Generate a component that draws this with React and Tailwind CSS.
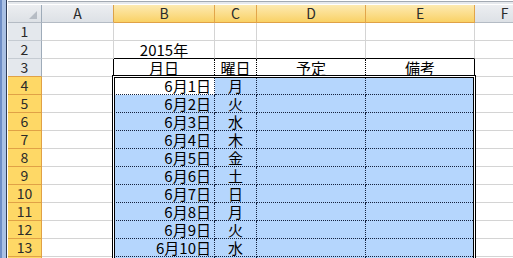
import React from 'react';

const COLS = ['A', 'B', 'C', 'D', 'E', 'F'];
const DATES = ['6月1日', '6月2日', '6月3日', '6月4日', '6月5日', '6月6日', '6月7日', '6月8日', '6月9日', '6月10日'];
const DAYS = ['月', '火', '水', '木', '金', '土', '日', '月', '火', '水'];
const HEAD3 = { B: '月日', C: '曜日', D: '予定', E: '備考' };

function ColHeader({ col }) {
  const picked = ['B', 'C', 'D', 'E'].includes(col);
  if (picked) {
    return (
      <div className="flex items-center justify-center border-r border-b border-r-[#e2a54a] border-b-[#e0a146] bg-gradient-to-b from-[#fdeab0] to-[#f9d164] text-[14px] leading-[17px] text-[#2a2a2a]">
        {col}
      </div>
    );
  }
  return (
    <div
      className={`flex items-center justify-center border-r border-b border-b-[#b4bbc4] bg-gradient-to-b from-[#eceef1] to-[#dde1e6] text-[14px] leading-[17px] text-[#2a2a2a] ${
        col === 'A' ? 'border-r-[#dca24a]' : 'border-r-[#c9ced4]'
      }`}
    >
      {col}
    </div>
  );
}

function RowHeader({ row }) {
  if (row >= 4) {
    return (
      <div className="flex items-center justify-center border-r border-b border-[#e0a146] bg-[#fed866] text-[14px] leading-[17px] text-[#2a2a2a]">
        {row}
      </div>
    );
  }
  return (
    <div
      className={`flex items-center justify-center border-r border-b border-r-[#9eabb9] bg-[#e4e8ed] text-[14px] leading-[17px] text-[#2a2a2a] ${
        row === 3 ? 'border-b-[#e0a146]' : 'border-b-[#c5cbd2]'
      }`}
    >
      {row}
    </div>
  );
}

function Cell({ row, col }) {
  const inTable = ['B', 'C', 'D', 'E'].includes(col);

  if (col === 'A') {
    return <div className={`border-r border-b border-b-[#d4d4d4] ${row === 3 ? 'border-r-black' : 'border-r-[#d4d4d4]'}`} />;
  }

  if (!inTable || row === 1) {
    return <div className="border-r border-b border-[#d4d4d4]" />;
  }

  if (row === 2) {
    return (
      <div className="flex items-center justify-center border-r border-b border-r-[#d4d4d4] border-b-black text-[15px] leading-[17px]">
        {col === 'B' ? '2015年' : ''}
      </div>
    );
  }

  if (row === 3) {
    return (
      <div
        className={`flex items-center justify-center border-r border-b border-b-black text-[15px] leading-[17px] ${
          col === 'E' ? 'border-r-black' : 'border-r-black border-dotted [border-bottom-style:solid]'
        }`}
      >
        {HEAD3[col]}
      </div>
    );
  }

  // selected range B4:E14
  const fill = row === 4 && col === 'B' ? 'bg-white' : 'bg-[#b5d6fd]';
  let text = '';
  if (row <= 13 && col === 'B') text = DATES[row - 4];
  if (row <= 13 && col === 'C') text = DAYS[row - 4];

  return (
    <div
      className={`flex items-center border-r border-b border-dotted border-[#14223f] text-[15px] leading-[17px] ${fill} ${
        col === 'B' ? 'justify-end pr-[3px]' : 'justify-center'
      }`}
    >
      {text}
    </div>
  );
}

export default function App() {
  const rows = Array.from({ length: 14 }, (_, i) => i + 1);

  return (
    <div className="w-[513px] h-[258px] overflow-hidden bg-white flex font-['Noto_Sans_CJK_JP','Noto_Sans',sans-serif] text-black">
      {/* window edge */}
      <div className="flex w-[8px] shrink-0">
        <div className="w-[2px] shrink-0 bg-[#6f8ec6]" />
        <div className="w-[4px] shrink-0 bg-[#a9c0e4]" />
        <div className="w-px shrink-0 bg-[#2f3d58]" />
        <div className="w-px shrink-0 bg-white" />
      </div>

      <div className="flex-1 flex flex-col min-w-0">
        {/* ribbon edge */}
        <div className="h-px shrink-0 bg-white" />
        <div className="h-px shrink-0 bg-[#a3aab3]" />
        <div className="h-[2px] shrink-0 bg-[#e6e9ed]" />
        <div className="h-px shrink-0 bg-white" />

        <div className="relative shrink-0 grid grid-cols-[34px_72px_101px_42px_109px_109px_60px] auto-rows-[18px]">
          {/* corner */}
          <div className="flex items-end justify-end pr-[4px] pb-[3px] border-r border-b border-r-[#9eabb9] border-b-[#b4bbc4] bg-gradient-to-b from-[#eceef1] to-[#dde1e6]">
            <svg width="8" height="8" viewBox="0 0 8 8">
              <polygon points="0,8 8,0 8,8" fill="#b6bcc4" />
            </svg>
          </div>
          {COLS.map((c) => (
            <ColHeader key={c} col={c} />
          ))}

          {rows.map((r) => (
            <React.Fragment key={r}>
              <RowHeader row={r} />
              {COLS.map((c) => (
                <Cell key={c} row={r} col={c} />
              ))}
            </React.Fragment>
          ))}

          {/* double border round B4:E13 */}
          <div className="pointer-events-none absolute left-[104px] top-[70px] w-[364px] h-[400px] border border-black shadow-[inset_0_0_0_1px_#ffffff,inset_0_0_0_2px_#000000]" />
        </div>
      </div>
    </div>
  );
}
